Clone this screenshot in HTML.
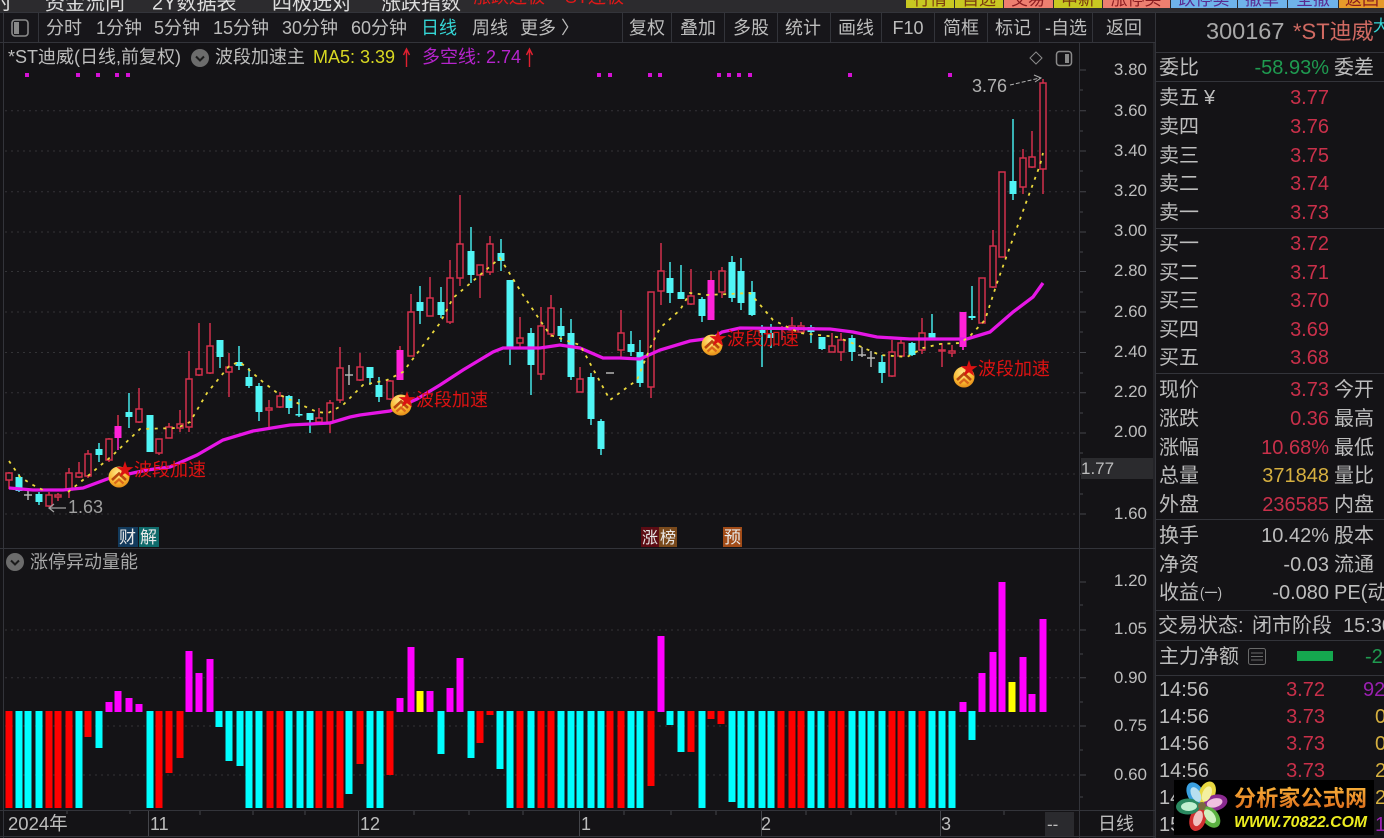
<!DOCTYPE html>
<html><head><meta charset="utf-8"><style>
html,body{margin:0;padding:0;background:#141316;width:1384px;height:838px;overflow:hidden}
svg{display:block;filter:blur(.3px)}
text{font-family:"Liberation Sans","Noto Sans CJK SC",sans-serif;fill:#bdbdbd;font-size:17px}
.t text{font-size:18px}
.s text{font-size:20px}
.e{text-anchor:end}
.m{text-anchor:middle}
.red,.s .red{fill:#c9304a}
</style></head><body>
<svg width="1384" height="838" viewBox="0 0 1384 838" xmlns="http://www.w3.org/2000/svg">
<defs>
<radialGradient id="b" cx=".45" cy=".3" r=".8"><stop offset="0" stop-color="#ffe98a"/><stop offset=".6" stop-color="#f9b52e"/><stop offset="1" stop-color="#d97a10"/></radialGradient>
<linearGradient id="o" x1="0" y1="0" x2="0" y2="1"><stop offset="0" stop-color="#f9b23a"/><stop offset="1" stop-color="#d9681a"/></linearGradient>
<g id="bd"><circle r="10.5" fill="url(#b)"/><path d="M-7 3 0-3.500 7 3" fill="none" stroke="#b8480e" stroke-width="2.600"/><path d="M-4.500 6.500 0 2.500 4.500 6.500" fill="none" stroke="#d8661a" stroke-width="2.200"/></g>
<g id="ch"><circle r="9" fill="#6c6c6c"/><path d="M-4-1.500 0 2.500 4-1.500" fill="none" stroke="#1c1c1c" stroke-width="2"/></g>
</defs>
<rect width="1384" height="838" fill="#141316"/>

<!-- top menu -->
<rect width="1384" height="12" fill="#2c2b2e"/>
<text x="-8" y="9.500" style="font-size:20px;fill:#ddd">时</text>
<text x="45" y="9.500" style="font-size:20px;fill:#ddd">资金流向</text>
<text x="152" y="9.500" style="font-size:20px;fill:#ddd">2Y数据表</text>
<text x="272" y="9.500" style="font-size:20px;fill:#ddd">四极选对</text>
<text x="381" y="9.500" style="font-size:20px;fill:#ddd">涨跌指数</text>
<text x="473" y="3" style="font-size:18px;fill:#e01818">涨跌连板</text>
<text x="565" y="3" style="font-size:18px;fill:#e01818">ST连板</text>
<rect y="8" x="900" width="484" height="4" fill="#2c2b2e"/>
<rect x="906" y="0" width="48" height="8" fill="#c8c822"/><text class="m" x="930" y="5" style="fill:#7a3a10">行情</text>
<rect x="955" y="0" width="48" height="8" fill="#c8c822"/><text class="m" x="979" y="5" style="fill:#7a3a10">自选</text>
<rect x="1004" y="0" width="49" height="8" fill="#ee7f70"/><text class="m" x="1028" y="5" style="fill:#8a1c20">交易</text>
<rect x="1054" y="0" width="48" height="8" fill="#c8c822"/><text class="m" x="1078" y="5" style="fill:#7a3a10">申新</text>
<rect x="1103" y="0" width="67" height="8" fill="#ee7f70"/><text class="m" x="1136" y="5" style="fill:#8a1c20">涨停买</text>
<rect x="1171" y="0" width="66" height="8" fill="#6fb3ea"/><text class="m" x="1204" y="5" style="fill:#5a2a90">跌停卖</text>
<rect x="1238" y="0" width="49" height="8" fill="#6fb3ea"/><text class="m" x="1262" y="5" style="fill:#5a2a90">撤单</text>
<rect x="1288" y="0" width="50" height="8" fill="#6fb3ea"/><text class="m" x="1313" y="5" style="fill:#5a2a90">全撤</text>
<rect x="1339" y="0" width="45" height="8" fill="#e79a2a"/><text class="m" x="1362" y="5" style="fill:#8a1c20">返回</text>

<!-- toolbar -->
<rect y="12" width="1155" height="31" fill="#17161a"/>
<path d="M0 12.500H1384M3.500 12V838M38.500 13V42M622.500 13V42M671.500 13V42M724.500 13V42M777.500 13V42M830.500 13V42M881.500 13V42M934.500 13V42M987.500 13V42M1039.500 13V42M1092.500 13V42M0 42.500H1155M1155.500 12V838" stroke="#33343a" fill="none"/>
<rect x="12" y="20" width="16" height="16" rx="3" fill="none" stroke="#8a8a8a" stroke-width="1.600"/><rect x="14" y="22" width="5" height="12" fill="#8a8a8a"/>
<g class="t">
<text x="46" y="34">分时</text><text x="96" y="34">1分钟</text><text x="154" y="34">5分钟</text><text x="213" y="34">15分钟</text><text x="282" y="34">30分钟</text><text x="351" y="34">60分钟</text>
<text x="421" y="34" style="fill:#35d6d6">日线</text><text x="472" y="34">周线</text><text x="520" y="34">更多</text><text x="561" y="34">〉</text>
<text class="m" x="647" y="34">复权</text><text class="m" x="698" y="34">叠加</text><text class="m" x="751" y="34">多股</text><text class="m" x="803" y="34">统计</text><text class="m" x="856" y="34">画线</text><text class="m" x="908" y="34">F10</text><text class="m" x="961" y="34">简框</text><text class="m" x="1013" y="34">标记</text><text class="m" x="1066" y="34">-自选</text><text class="m" x="1124" y="34">返回</text>
</g>

<!-- main header -->
<g class="t">
<text x="8" y="63">*ST迪威(日线,前复权)</text>
<text x="215" y="63">波段加速主</text>
<text x="313" y="63" style="fill:#d8d822">MA5: 3.39</text>
<text x="422" y="63" style="fill:#b524cc">多空线: 2.74</text>
</g>
<use href="#ch" x="200" y="58"/>
<path d="M406.500 67V50M403.500 55 406.500 49 409.500 55" fill="none" stroke="#e02030" stroke-width="1.400"/>
<path d="M529.500 67V50M526.500 55 529.500 49 532.500 55" fill="none" stroke="#e02030" stroke-width="1.400"/>
<path d="M1036 52 1042 58 1036 64 1030 58Z" fill="none" stroke="#8a8a8a"/>
<rect x="1056.500" y="51.500" width="15" height="14" rx="3" fill="none" stroke="#8a8a8a" stroke-width="1.500"/><rect x="1065" y="54" width="4" height="9" fill="#8a8a8a"/>

<!-- pink marks -->
<path d="M25 73h4v4h-4zM76 73h4v4h-4zM96 73h4v4h-4zM115 73h4v4h-4zM126 73h4v4h-4zM597 73h4v4h-4zM608 73h4v4h-4zM648 73h4v4h-4zM658 73h4v4h-4zM717 73h4v4h-4zM727 73h4v4h-4zM737 73h4v4h-4zM748 73h4v4h-4zM848 73h4v4h-4zM948 73h4v4h-4z" fill="#d411d4"/>

<!-- grid -->
<path d="M5 110.700H1078M5 151H1078M5 191.700H1078M5 232H1078M5 271.500H1078M5 312H1078M5 352.500H1078M5 392.700H1078M5 433H1078M5 474H1078M5 514H1078M5 630H1078M5 677.700H1078M5 726H1078M5 775H1078" stroke="#333336" stroke-dasharray="2 4" fill="none"/>

<!-- frames -->
<path d="M1079.500 43V838M0 548.500H1155M0 810.500H1155M1154 43V838M0 836.500H1155" stroke="#33343a" fill="none"/>

<!-- right axis -->
<path d="M1080 70h6M1080 90h3M1080 110.700h6M1080 131h3M1080 151h6M1080 171h3M1080 191.700h6M1080 212h3M1080 232h6M1080 252h3M1080 271.500h6M1080 292h3M1080 312h6M1080 332h3M1080 352.500h6M1080 373h3M1080 392.700h6M1080 413h3M1080 433h6M1080 453h3M1080 474h6M1080 494h3M1080 514h6M1080 582h6M1080 605h3M1080 630h6M1080 654h3M1080 677.700h6M1080 702h3M1080 726h6M1080 750h3M1080 775h6M1080 797h3" stroke="#44454a" fill="none"/>
<rect x="1081" y="458" width="72" height="21" fill="#2b2b2e"/>
<g>
<text class="e" x="1147" y="75">3.80</text><text class="e" x="1147" y="116">3.60</text><text class="e" x="1147" y="156">3.40</text><text class="e" x="1147" y="196">3.20</text><text class="e" x="1147" y="236">3.00</text><text class="e" x="1147" y="276">2.80</text><text class="e" x="1147" y="317">2.60</text><text class="e" x="1147" y="357">2.40</text><text class="e" x="1147" y="397">2.20</text><text class="e" x="1147" y="437">2.00</text><text x="1081" y="474">1.77</text><text class="e" x="1147" y="519">1.60</text>
<text class="e" x="1147" y="586">1.20</text><text class="e" x="1147" y="634">1.05</text><text class="e" x="1147" y="683">0.90</text><text class="e" x="1147" y="731">0.75</text><text class="e" x="1147" y="780">0.60</text>
</g>

<!-- candles: wicks -->
<path stroke="#d2304c" stroke-width="1.500" fill="none" d="M9 472V489M49 492V507M58 493V501M69 468V498M79 462V478M88 450V478M109 438V462M139 388V423M159 439V455M169 423V438M180 410V432M189 351V432M199 323V376M210 323V374M229 353V397M269 400V427M280 392V408M319 408V423M330 400V433M340 347V403M360 353V381M390 380V400M411 294V356M430 277V316M450 260V324M460 195V286M480 265V298M490 236V275M520 317V347M541 307V380M551 295V337M580 367V392M621 310V357M651 292V398M661 243V305M691 269V305M722 267V298M782 326V340M792 317V330M801 322V333M832 333V352M841 333V361M892 340V377M901 337V357M922 318V354M942 343V367M952 345V357M982 278V323M993 230V288M1002 172V257M1023 149V194M1032 131V168M1043 79V194M118 415V426M400 346V350M711 271V280M963 347V350"/>
<path stroke="#45e8e8" stroke-width="1.500" fill="none" d="M19 474V492M39 492V505M99 443V462M129 393V428M220 340V368M239 346V370M249 368V388M259 383V421M289 395V414M299 399V417M310 413V433M370 367V385M379 377V402M420 286V324M441 287V318M471 227V283M501 239V271M510 347V365M531 328V395M561 308V342M571 319V380M591 373V425M601 419V455M631 331V356M640 340V387M670 262V303M681 265V299M702 297V322M732 256V302M741 258V310M752 281V316M762 325V367M771 324V348M811 325V343M822 349V350M852 335V361M882 355V383M912 342V356M932 314V338M972 286V320M1013 119V200"/>
<path stroke="#b4b4b4" stroke-width="1.500" fill="none" d="M28 490V500M24 495H32M349 365V385M345 375H353M606 373H614M862 347V357M858 355H866M871 351V367M867 358H875"/>
<!-- red bodies -->
<path stroke="#d2304c" stroke-width="1.500" fill="#141316" d="M6 473h6v7h-6zM46 495h6v11h-6zM55 495h6v2h-6zM66 473h6v17h-6zM76 473h6v4h-6zM85 454h6v22h-6zM106 439h6v21h-6zM136 409h6v13h-6zM156 439h6v14h-6zM166 427h6v11h-6zM177 424h6v4h-6zM186 379h6v48h-6zM196 369h6v6h-6zM207 346h6v27h-6zM226 367h6v5h-6zM266 408h6v2h-6zM277 396h6v11h-6zM316 418h6v4h-6zM327 403h6v19h-6zM337 368h6v32h-6zM357 367h6v13h-6zM387 381h6v18h-6zM408 312h6v44h-6zM427 298h6v18h-6zM447 278h6v44h-6zM457 244h6v34h-6zM477 265h6v10h-6zM487 244h6v28h-6zM517 338h6v5h-6zM538 326h6v48h-6zM548 308h6v26h-6zM577 379h6v13h-6zM618 333h6v17h-6zM648 292h6v95h-6zM658 271h6v20h-6zM688 296h6v8h-6zM719 271h6v21h-6zM789 326h6v4h-6zM798 326h6v6h-6zM829 346h6v6h-6zM838 340h6v12h-6zM889 352h6v24h-6zM898 343h6v13h-6zM919 333h6v17h-6zM939 350h6v1h-6zM949 351h6v2h-6zM979 278h6v45h-6zM990 246h6v41h-6zM999 172h6v85h-6zM1020 158h6v29h-6zM1029 157h6v10h-6zM1040 83h6v86h-6z"/>
<!-- cyan bodies -->
<path fill="#50f5f5" d="M15.500 477h7v14h-7zM35.500 494h7v8h-7zM95.500 449h7v6h-7zM125.500 412h7v5h-7zM146.500 415h7v37h-7zM216.500 340h7v17h-7zM235.500 362h7v4h-7zM245.500 377h7v9h-7zM255.500 386h7v26h-7zM285.500 396h7v12h-7zM295.500 414h7v1.500h-7zM306.500 413h7v7h-7zM366.500 367h7v11h-7zM375.500 385h7v12h-7zM416.500 302h7v9h-7zM437.500 302h7v13h-7zM467.500 251h7v24h-7zM497.500 253h7v8h-7zM506.500 280h7v67h-7zM527.500 333h7v32h-7zM557.500 326h7v10h-7zM567.500 333h7v44h-7zM587.500 377h7v42h-7zM597.500 421h7v28h-7zM627.500 344h7v8h-7zM636.500 352h7v31h-7zM666.500 278h7v15h-7zM677.500 292h7v7h-7zM698.500 299h7v17h-7zM728.500 262h7v36h-7zM737.500 271h7v32h-7zM748.500 292h7v23h-7zM758.500 330h7v3h-7zM767.500 333h7v5h-7zM807.500 327h7v5h-7zM818.500 337h7v12h-7zM848.500 338h7v14h-7zM878.500 362h7v11h-7zM908.500 343h7v12h-7zM928.500 333h7v5h-7zM968.500 316h7v2h-7zM1009.500 181h7v13h-7z"/>
<path fill="#ff22d8" d="M114.500 426h7v12h-7zM396.500 350h7v30h-7zM707.500 280h7v40h-7zM959.500 312h7v35h-7z"/>
<path stroke="#ff22d8" stroke-width="1.500" fill="none" d="M118 438V450M963 347V350"/>

<!-- magenta MA -->
<polyline points="9,488 33,490 63,490 83,488 110,478 133,473 147,470 170,467 197,455 223,440 253,431 290,425 330,423 350,417 360,415 390,411 417,399 440,385 463,370 493,352 503,348 540,348 560,345 580,348 603,358 620,358 640,359 660,350 690,341 713,338 722,332 740,328 830,329 853,332 877,337 910,339 960,339 967,339 990,332 1013,312 1033,297 1043,283" fill="none" stroke="#e616e6" stroke-width="3.300"/>

<!-- yellow MA5 -->
<polyline points="9,461 20,477 33,485 43,490" fill="none" stroke="#ecd93c" stroke-width="1.800" stroke-dasharray="3 5.500"/>
<polyline points="68,492 83,480 113,455 140,429 177,428 190,422 207,393 230,365 240,362 263,382 280,395 317,412 328,413 343,405 363,385 387,380 403,372 440,323 453,298 480,275 500,258 523,295 550,335 580,345 610,400 637,380 650,348 660,328 680,310 690,293 707,295 750,293 773,320 800,333 837,337 857,345 880,355 907,357 923,348 940,344 960,343 970,336 985,320 997,283 1007,255 1027,200 1040,165 1043,153" fill="none" stroke="#ecd93c" stroke-width="1.800" stroke-dasharray="3 5.500"/>

<!-- badges -->
<use href="#bd" x="119" y="477"/><use href="#bd" x="401" y="405"/><use href="#bd" x="712" y="345"/><use href="#bd" x="964" y="377"/>
<g class="t">
<text x="116" y="476" style="fill:#dc1212">★波段加速</text>
<text x="398" y="406" style="fill:#dc1212">★波段加速</text>
<text x="709" y="345" style="fill:#dc1212">★波段加速</text>
<text x="960" y="375" style="fill:#dc1212">★波段加速</text>
</g>

<!-- price notes -->
<text x="972" y="92" style="fill:#b0b0b0;font-size:18px">3.76</text>
<path d="M1010 85 1040 78" stroke="#b0b0b0" stroke-dasharray="4 2" fill="none"/><path d="M1034 75 1041 78 1035 82" stroke="#b0b0b0" fill="none"/>
<path d="M49 508H66M54 504 49 508 54 512" stroke="#a0a0a0" stroke-width="1.300" fill="none"/>
<text x="68" y="513" style="fill:#a0a0a0;font-size:18px">1.63</text>

<!-- tags -->
<rect x="118" y="527" width="20" height="20" fill="#123a5c"/><rect x="139" y="527" width="20" height="20" fill="#0f6b6b"/>
<text x="119" y="543" style="fill:#e8e8e8">财</text><text x="140" y="543" style="fill:#e8e8e8">解</text>
<rect x="641" y="527" width="18" height="20" fill="#5c0c14"/><rect x="659" y="527" width="18" height="20" fill="#7a4a1c"/>
<text x="642" y="543" style="fill:#e8e8e8;font-size:16px">涨</text><text x="660" y="543" style="fill:#e8e8e8;font-size:16px">榜</text>
<rect x="723" y="527" width="19" height="20" fill="#a24c18"/><text x="724" y="543" style="fill:#e8e8e8">预</text>

<!-- subpanel -->
<use href="#ch" x="15" y="562"/>
<text x="30" y="568" style="font-size:18px;fill:#a8a8a8">涨停异动量能</text>

<path fill="#00ffff" d="M15.500 711h7V808h-7zM24.500 711h7V808h-7zM35.500 711h7V808h-7zM75.500 711h7V808h-7zM95.500 711h7V748h-7zM146.500 711h7V808h-7zM215.500 711h7V727h-7zM225.500 711h7V761h-7zM236.500 711h7V766h-7zM245.500 711h7V808h-7zM255.500 711h7V808h-7zM285.500 711h7V808h-7zM296.500 711h7V808h-7zM306.500 711h7V808h-7zM345.500 711h7V794h-7zM366.500 711h7V808h-7zM376.500 711h7V808h-7zM437.500 711h7V754h-7zM467.500 711h7V758h-7zM496.500 711h7V769h-7zM506.500 711h7V808h-7zM527.500 711h7V808h-7zM557.500 711h7V808h-7zM567.500 711h7V808h-7zM576.500 711h7V808h-7zM587.500 711h7V808h-7zM597.500 711h7V808h-7zM627.500 711h7V808h-7zM636.500 711h7V808h-7zM666.500 711h7V725h-7zM677.500 711h7V752h-7zM698.500 711h7V808h-7zM728.500 711h7V802h-7zM737.500 711h7V808h-7zM747.500 711h7V808h-7zM758.500 711h7V808h-7zM767.500 711h7V808h-7zM807.500 711h7V808h-7zM817.500 711h7V808h-7zM848.500 711h7V808h-7zM858.500 711h7V808h-7zM867.500 711h7V808h-7zM878.500 711h7V808h-7zM908.500 711h7V808h-7zM928.500 711h7V808h-7zM938.500 711h7V808h-7zM948.500 711h7V808h-7zM968.500 711h7V740h-7z"/>
<path fill="#ff0000" d="M5.500 711h7V808h-7zM45.500 711h7V808h-7zM54.500 711h7V808h-7zM65.500 711h7V808h-7zM84.500 711h7V737h-7zM155.500 711h7V808h-7zM165.500 711h7V773h-7zM176.500 711h7V758h-7zM266.500 711h7V808h-7zM276.500 711h7V808h-7zM315.500 711h7V808h-7zM326.500 711h7V808h-7zM336.500 711h7V808h-7zM356.500 711h7V764h-7zM386.500 711h7V775h-7zM476.500 711h7V743h-7zM486.500 711h7V715h-7zM516.500 711h7V808h-7zM537.500 711h7V808h-7zM547.500 711h7V808h-7zM606.500 711h7V808h-7zM617.500 711h7V808h-7zM647.500 711h7V786h-7zM687.500 711h7V752h-7zM707.500 711h7V719h-7zM717.500 711h7V724h-7zM777.500 711h7V808h-7zM788.500 711h7V808h-7zM797.500 711h7V808h-7zM828.500 711h7V808h-7zM837.500 711h7V808h-7zM888.500 711h7V808h-7zM897.500 711h7V808h-7zM918.500 711h7V808h-7z"/>
<path fill="#ff00ff" d="M105.500 702h7V712h-7zM114.500 691h7V712h-7zM125.500 698h7V712h-7zM135.500 704h7V712h-7zM185.500 651h7V712h-7zM195.500 673h7V712h-7zM206.500 659h7V712h-7zM396.500 698h7V712h-7zM407.500 647h7V712h-7zM426.500 691h7V712h-7zM446.500 688h7V712h-7zM456.500 658h7V712h-7zM657.500 636h7V712h-7zM959.500 702h7V712h-7zM978.500 673h7V712h-7zM989.500 652h7V712h-7zM998.500 582h7V712h-7zM1019.500 657h7V712h-7zM1028.500 694h7V712h-7zM1039.500 619h7V712h-7z"/>
<path fill="#ffff00" d="M416.500 691h7V712h-7zM1008.500 682h7V712h-7z"/>

<!-- bottom axis -->
<path d="M148.500 811V836M358.500 811V836M579.500 811V836M761.500 811V836M940.500 811V836M67 811v3M130 811v3M200 811v4M253 811v4M305 811v4M414 811v4M469 811v4M523 811v4M624 811v4M671 811v4M716 811v4M806 811v4M851 811v4M896 811v4M1004 811v4" stroke="#44454a" fill="none"/>
<text x="8" y="830" style="font-size:18.500px">2024年</text>
<text x="150" y="830" style="font-size:18px">11</text><text x="360" y="830" style="font-size:18px">12</text><text x="581" y="830" style="font-size:18px">1</text><text x="761" y="830" style="font-size:18px">2</text><text x="941" y="830" style="font-size:18px">3</text>
<rect x="1045" y="812" width="29" height="24" fill="#2a2a2e"/><text x="1047" y="830">--</text>
<text x="1098" y="830" style="font-size:18px">日线</text>

<!-- sidebar -->
<rect x="1156" y="13" width="228" height="825" fill="#141316"/>
<g class="s">
<path d="M1156 52.500H1384M1156 81.500H1384M1156 228.500H1384M1156 373.500H1384M1156 519.500H1384M1156 610.500H1384M1156 640.500H1384M1156 675.500H1384" stroke="#33343a" fill="none"/>
<text x="1206" y="39" style="font-size:23.500px;fill:#a8a8a8">300167</text>
<text x="1293" y="39" style="font-size:22px;fill:#d06a62">*ST迪威</text>
<text x="1373" y="31" style="font-size:16px;fill:#35d6d6">大</text>
<text x="1159" y="74">委比</text><text class="e" x="1329" y="74" style="fill:#1f9a50">-58.93%</text><text x="1334" y="74">委差</text>
<text x="1159" y="104">卖五</text><text x="1204" y="104">¥</text><text class="e red" x="1329" y="104">3.77</text>
<text x="1159" y="133">卖四</text><text class="e red" x="1329" y="133">3.76</text>
<text x="1159" y="162">卖三</text><text class="e red" x="1329" y="162">3.75</text>
<text x="1159" y="190">卖二</text><text class="e red" x="1329" y="190">3.74</text>
<text x="1159" y="219">卖一</text><text class="e red" x="1329" y="219">3.73</text>
<text x="1159" y="250">买一</text><text class="e red" x="1329" y="250">3.72</text>
<text x="1159" y="279">买二</text><text class="e red" x="1329" y="279">3.71</text>
<text x="1159" y="307">买三</text><text class="e red" x="1329" y="307">3.70</text>
<text x="1159" y="336">买四</text><text class="e red" x="1329" y="336">3.69</text>
<text x="1159" y="364">买五</text><text class="e red" x="1329" y="364">3.68</text>
<text x="1159" y="396">现价</text><text class="e red" x="1329" y="396">3.73</text><text x="1334" y="396">今开</text>
<text x="1159" y="425">涨跌</text><text class="e red" x="1329" y="425">0.36</text><text x="1334" y="425">最高</text>
<text x="1159" y="454">涨幅</text><text class="e red" x="1329" y="454">10.68%</text><text x="1334" y="454">最低</text>
<text x="1159" y="482">总量</text><text class="e" x="1329" y="482" style="fill:#d6b040">371848</text><text x="1334" y="482">量比</text>
<text x="1159" y="511">外盘</text><text class="e red" x="1329" y="511">236585</text><text x="1334" y="511">内盘</text>
<text x="1159" y="542">换手</text><text class="e" x="1329" y="542">10.42%</text><text x="1334" y="542">股本</text>
<text x="1159" y="571">净资</text><text class="e" x="1329" y="571">-0.03</text><text x="1334" y="571">流通</text>
<text x="1159" y="599">收益</text><text x="1200" y="598" style="font-size:15px" textLength="22" lengthAdjust="spacingAndGlyphs">(一)</text><text class="e" x="1329" y="599">-0.080</text><text x="1334" y="599">PE(动</text>
<text x="1158" y="632">交易状态:</text><text x="1252" y="632">闭市阶段</text><text x="1343" y="632">15:30</text>
<text x="1159" y="663">主力净额</text>
<rect x="1248.500" y="648.500" width="17" height="16" rx="2" fill="none" stroke="#6a6a6a"/><path d="M1251 653h12M1251 656.500h12M1251 660h12" stroke="#6a6a6a"/>
<rect x="1297" y="651" width="36" height="10" fill="#15a84f"/>
<text x="1365" y="663" style="fill:#1f9a50">-2</text>
<text x="1159" y="696">14:56</text><text class="e red" x="1325" y="696">3.72</text><text x="1363" y="696" style="fill:#9a20b0">92</text>
<text x="1159" y="723">14:56</text><text class="e red" x="1325" y="723">3.73</text><text x="1375" y="723" style="fill:#d6b040">0</text>
<text x="1159" y="750">14:56</text><text class="e red" x="1325" y="750">3.73</text><text x="1375" y="750" style="fill:#d6b040">0</text>
<text x="1159" y="777">14:56</text><text class="e red" x="1325" y="777">3.73</text><text x="1375" y="777" style="fill:#d6b040">2</text>
<text x="1159" y="804">14:56</text><text x="1375" y="804" style="fill:#d6b040">2</text>
<text x="1159" y="831">15:00</text><text x="1375" y="831" style="fill:#9a20b0">1</text>
</g>

<!-- logo -->
<rect x="1174" y="780" width="200" height="55" fill="#000"/>
<g transform="translate(1202 806)">
<ellipse cx="0" cy="-14" rx="8" ry="12" transform="rotate(-28)" fill="#3aa0e0"/>
<ellipse cx="0" cy="-14" rx="8" ry="12" transform="rotate(22)" fill="#e8d840"/>
<ellipse cx="0" cy="-14" rx="8" ry="12" transform="rotate(76)" fill="#8a2a90"/>
<ellipse cx="0" cy="-14" rx="8" ry="12" transform="rotate(142)" fill="#5ab040"/>
<ellipse cx="0" cy="-14" rx="8" ry="12" transform="rotate(198)" fill="#d03030"/>
<ellipse cx="0" cy="-14" rx="8" ry="12" transform="rotate(268)" fill="#2a8a60"/>
<ellipse cx="0" cy="-13" rx="4.500" ry="8" transform="rotate(-28)" fill="#b8e0f0"/>
<ellipse cx="0" cy="-13" rx="4.500" ry="8" transform="rotate(22)" fill="#f4f0a0"/>
<ellipse cx="0" cy="-13" rx="4.500" ry="8" transform="rotate(76)" fill="#f0c0e0"/>
<ellipse cx="0" cy="-13" rx="4.500" ry="8" transform="rotate(142)" fill="#d0f0c0"/>
<ellipse cx="0" cy="-13" rx="4.500" ry="8" transform="rotate(198)" fill="#f0c0c0"/>
<ellipse cx="0" cy="-13" rx="4.500" ry="8" transform="rotate(268)" fill="#c0f0d0"/>
<circle r="4" fill="#7a6a40"/>
</g>
<text x="1234" y="806" style="font-size:22px;font-weight:bold;fill:url(#o)" textLength="133">分析家公式网</text>
<text x="1234" y="827" style="font-size:16px;font-weight:bold;font-style:italic;fill:#ecec20" textLength="133" lengthAdjust="spacingAndGlyphs">WWW.70822.COM</text>
</svg>
</body></html>
